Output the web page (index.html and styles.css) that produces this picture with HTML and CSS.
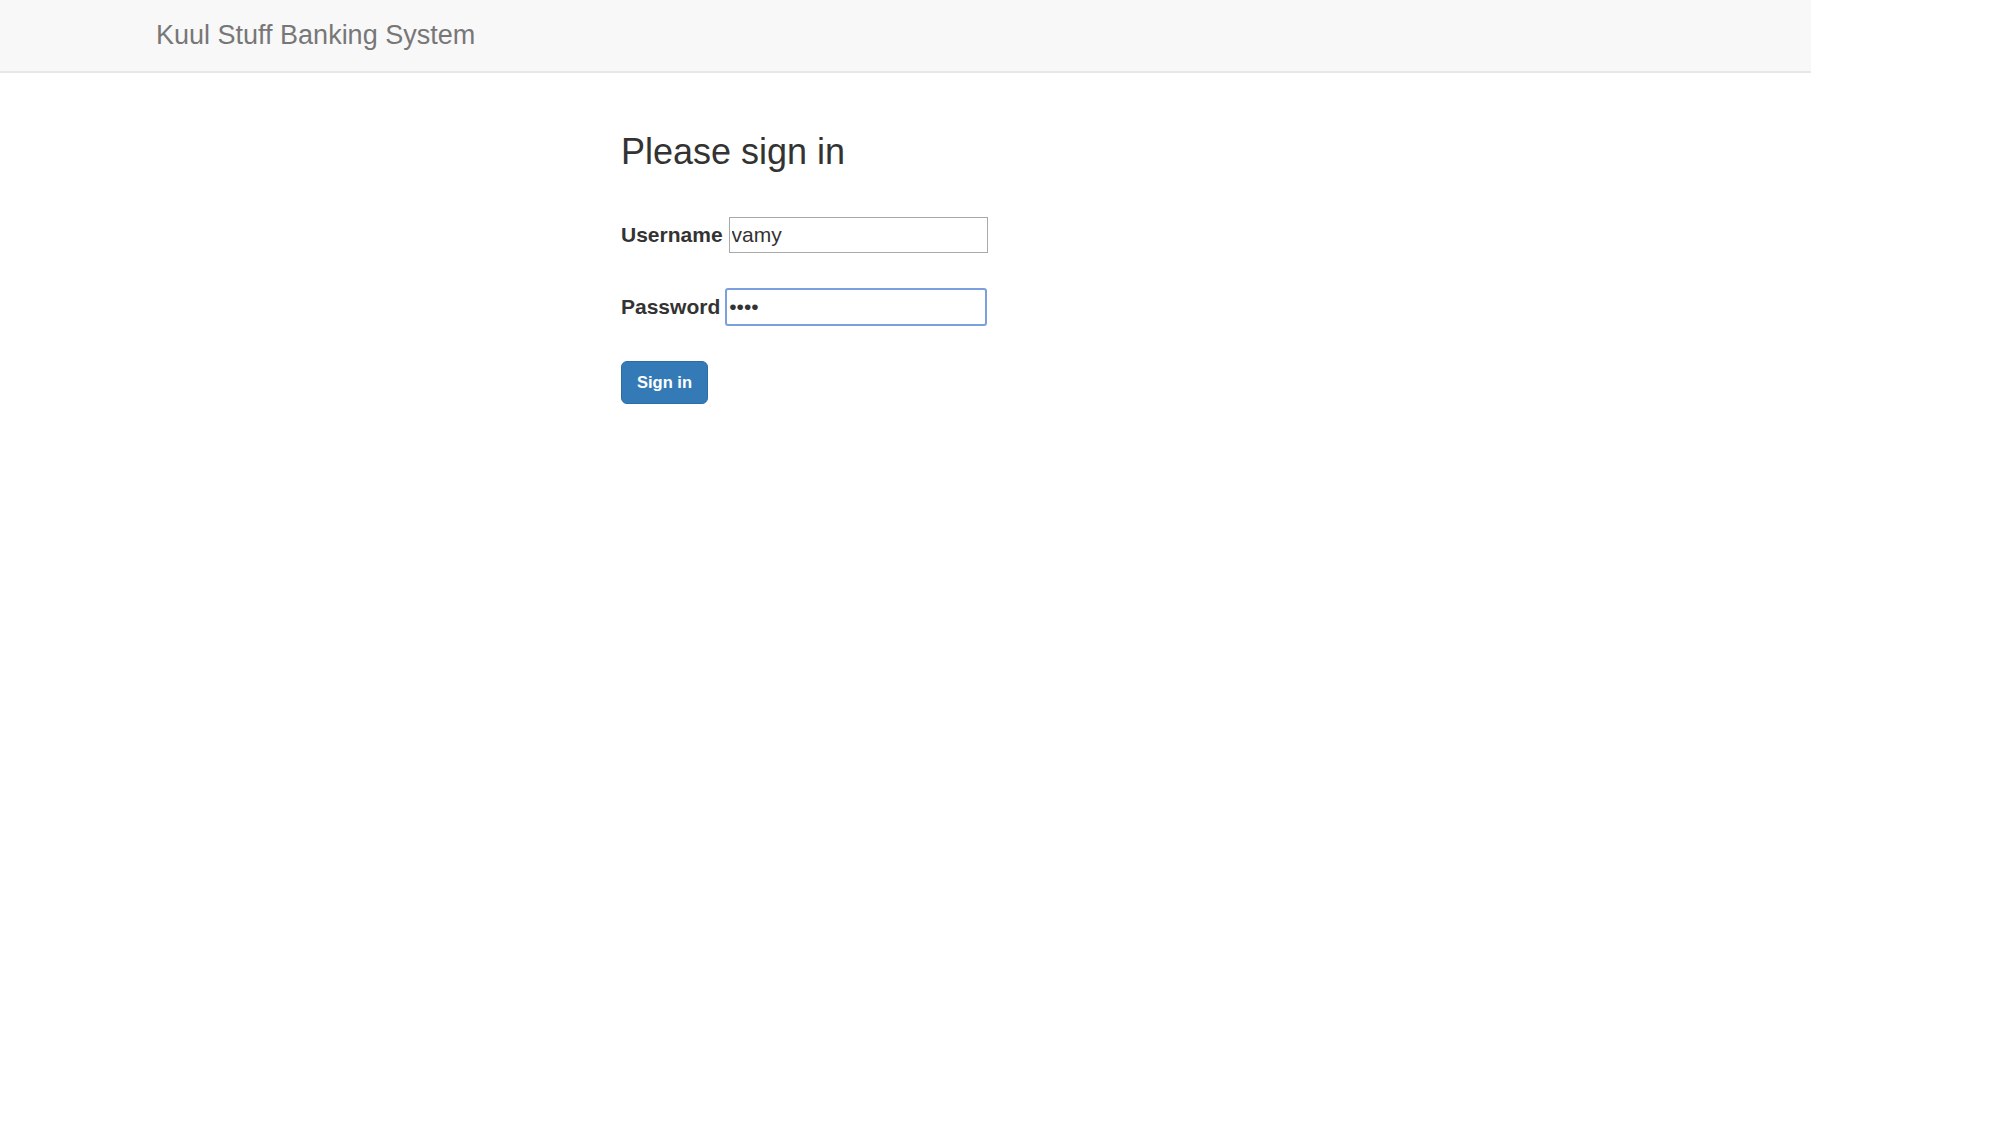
FILE: index.html
```html
<!DOCTYPE html>
<html lang="en">
<head>
    <meta charset="UTF-8">
    <meta name="viewport" content="width=device-width, initial-scale=1.0">
    <title>Kuul Stuff Banking System</title>
    <link rel="stylesheet" href="styles.css">
</head>
<body>
    <nav class="navbar">
        <a class="navbar-brand" href="#">Kuul Stuff Banking System</a>
    </nav>
    <div class="container">
        <h2 class="form-signin-heading">Please sign in</h2>
        <form class="form-signin" action="/login" method="POST">
            <div class="form-row">
                <label for="username">Username</label>
                <input type="text" id="username" name="username" value="vamy">
            </div>
            <div class="form-row">
                <label for="password">Password</label>
                <input type="password" id="password" name="password" class="is-focused" value="vamy">
            </div>
            <button type="submit" class="btn-primary">Sign in</button>
        </form>
    </div>
</body>
</html>
```

FILE: styles.css
```css
body {
    margin: 0;
    font-family: "Liberation Sans", Arial, sans-serif;
    color: #333;
    background-color: #fff;
}
.navbar {
    width: 1811px;
    height: 71px;
    background-color: #f8f8f8;
    border-bottom: 2px solid #e7e7e7;
    box-sizing: content-box;
}
.navbar-brand {
    display: inline-block;
    margin-left: 156px;
    padding-top: 22px;
    font-size: 27px;
    line-height: 27px;
    color: #777;
    text-decoration: none;
}
.container {
    padding-left: 621px;
}
.form-signin-heading {
    margin: 59px 0 45px;
    font-size: 36px;
    font-weight: normal;
    line-height: 39.6px;
    color: #333;
}
.form-row {
    display: flex;
    align-items: center;
    margin-bottom: 36px;
}
.form-row label {
    font-size: 21px;
    font-weight: bold;
    margin-right: 6px;
}
.form-row input {
    width: 259px;
    height: 36px;
    box-sizing: border-box;
    padding: 0 2px;
    border: 1px solid #a9a9a9;
    font-family: "Liberation Sans", Arial, sans-serif;
    font-size: 21px;
    color: #333;
    outline: none;
}
.form-row input.is-focused {
    width: 260px;
    border-color: #7aa0e0;
    border-radius: 2px;
    box-shadow: 0 0 0 1px #7aa0e0;
}
.btn-primary {
    display: flex;
    align-items: center;
    justify-content: center;
    width: 87px;
    height: 43px;
    margin-top: 1px;
    padding: 0;
    background-color: #337ab7;
    border: 1px solid #2e6da4;
    border-radius: 6px;
    color: #fff;
    font-family: "Liberation Sans", Arial, sans-serif;
    font-size: 16.5px;
    font-weight: bold;
    cursor: pointer;
}
```
